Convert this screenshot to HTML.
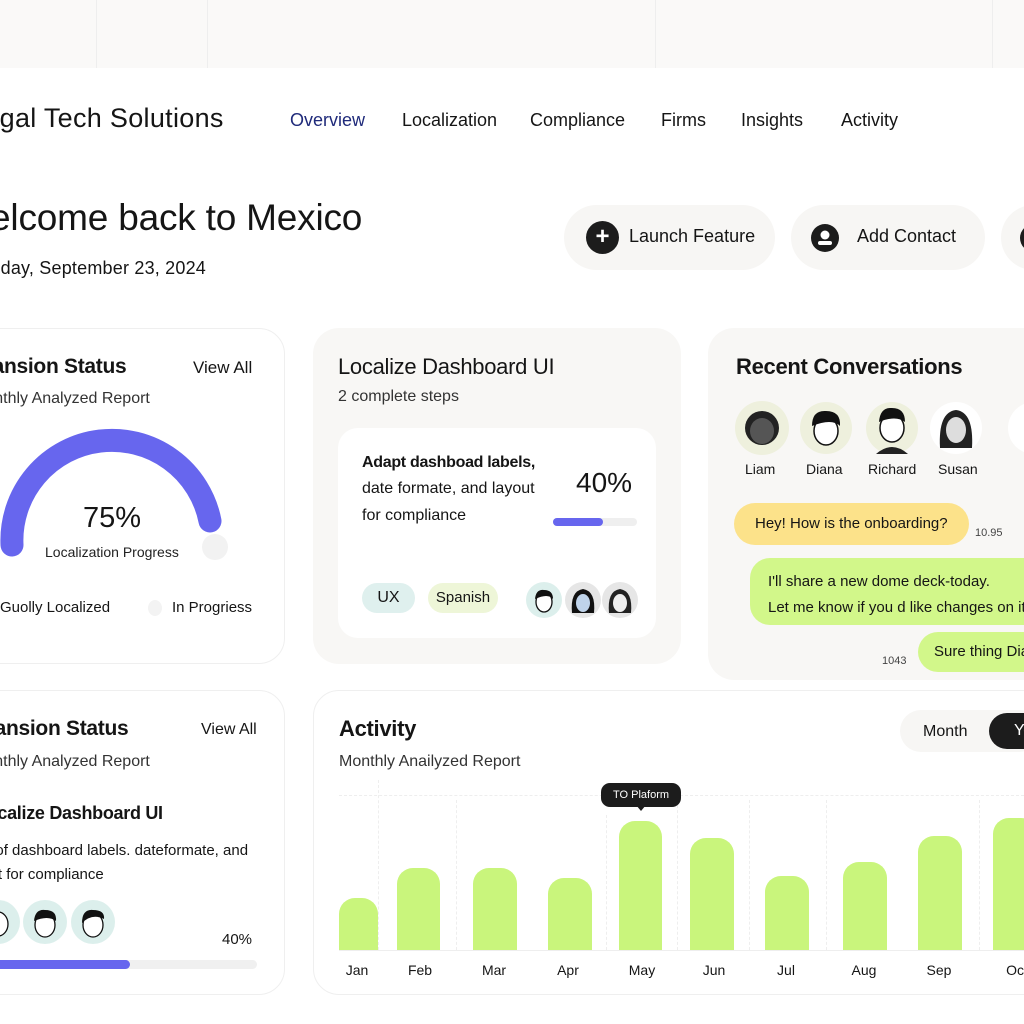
<!DOCTYPE html>
<html><head><meta charset="utf-8"><style>
*{box-sizing:border-box;margin:0;padding:0}
html,body{width:1024px;height:1024px;overflow:hidden}
body{background:#fff;font-family:"Liberation Sans",sans-serif;color:#151515;position:relative}
.a{position:absolute;white-space:nowrap}
.card{position:absolute;border-radius:26px}
.w{background:#fff;border:1.5px solid #efefef}
.g{background:#f8f7f5}
.bar{position:absolute;background:#c9f57c;border-radius:16px 16px 0 0;bottom:74px}
.ml{position:absolute;top:962px;font-size:14px;width:50px;text-align:center}
</style></head><body>
<div class="a" style="left:0;top:0;width:1024px;height:68px;background:#faf9f8"></div>
<div class="a" style="left:96px;top:0;width:1px;height:68px;background:#eee"></div>
<div class="a" style="left:207px;top:0;width:1px;height:68px;background:#eee"></div>
<div class="a" style="left:655px;top:0;width:1px;height:68px;background:#eee"></div>
<div class="a" style="left:992px;top:0;width:1px;height:68px;background:#eee"></div>

<div class="a" style="left:-31px;top:103px;font-size:27px;letter-spacing:0.3px">Legal Tech Solutions</div>
<div class="a" style="left:290px;top:110px;font-size:18px;color:#1f2a7a">Overview</div>
<div class="a" style="left:402px;top:110px;font-size:18px">Localization</div>
<div class="a" style="left:530px;top:110px;font-size:18px">Compliance</div>
<div class="a" style="left:661px;top:110px;font-size:18px">Firms</div>
<div class="a" style="left:741px;top:110px;font-size:18px">Insights</div>
<div class="a" style="left:841px;top:110px;font-size:18px">Activity</div>

<div class="a" style="left:-44px;top:197px;font-size:37px;letter-spacing:-0.2px">Welcome back to Mexico</div>
<div class="a" style="left:-35px;top:258px;font-size:18px;letter-spacing:0.2px">Monday, September 23, 2024</div>

<div class="a" style="left:564px;top:205px;width:211px;height:65px;border-radius:33px;background:#f7f6f4"></div>
<div class="a" style="left:586px;top:221px;width:33px;height:33px;border-radius:50%;background:#1c1c1c;color:#fff;font-size:24px;line-height:32px;text-align:center;font-weight:bold">+</div>
<div class="a" style="left:629px;top:226px;font-size:18px">Launch Feature</div>
<div class="a" style="left:791px;top:205px;width:194px;height:65px;border-radius:33px;background:#f7f6f4"></div>
<svg class="a" style="left:811px;top:224px" width="28" height="28"><circle cx="14" cy="14" r="14" fill="#1c1c1c"/><circle cx="14" cy="11" r="4.5" fill="#fff"/><rect x="7" y="17" width="14" height="4" rx="2" fill="#fff"/></svg>
<div class="a" style="left:857px;top:226px;font-size:18px">Add Contact</div>
<div class="a" style="left:1001px;top:205px;width:80px;height:65px;border-radius:33px;background:#f7f6f4"></div>
<div class="a" style="left:1020px;top:224px;width:28px;height:28px;border-radius:50%;background:#1c1c1c"></div>

<!-- card 1 -->
<div class="card w" style="left:-40px;top:328px;width:325px;height:336px"></div>
<div class="a" style="left:-45px;top:355px;font-size:21px;font-weight:bold;letter-spacing:-0.3px">Expansion Status</div>
<div class="a" style="left:193px;top:358px;font-size:17px">View All</div>
<div class="a" style="left:-28px;top:390px;font-size:16px;color:#333">Monthly Analyzed Report</div>
<svg class="a" style="left:0;top:425px" width="240" height="140">
<circle cx="215" cy="122" r="13" fill="#f2f2f2"/>
<path d="M12 120 A100 100 0 0 1 210 96" fill="none" stroke="#6766ee" stroke-width="23" stroke-linecap="round"/>
</svg>
<div class="a" style="left:83px;top:502px;font-size:29px">75%</div>
<div class="a" style="left:45px;top:544px;font-size:14px;color:#222">Localization Progress</div>
<div class="a" style="left:0;top:599px;font-size:15px">Guolly Localized</div>
<div class="a" style="left:148px;top:600px;width:14px;height:16px;border-radius:50%;background:#f3f3f3"></div>
<div class="a" style="left:172px;top:599px;font-size:15px">In Progriess</div>

<!-- card 2 -->
<div class="card g" style="left:313px;top:328px;width:368px;height:336px"></div>
<div class="a" style="left:338px;top:354px;font-size:22px;letter-spacing:-0.3px">Localize Dashboard UI</div>
<div class="a" style="left:338px;top:388px;font-size:16px;color:#333">2 complete steps</div>
<div class="card" style="left:338px;top:428px;width:318px;height:210px;background:#fff;border-radius:20px"></div>
<div class="a" style="left:362px;top:454px;font-size:16px;font-weight:bold;letter-spacing:-0.3px">Adapt dashboad labels,</div>
<div class="a" style="left:362px;top:480px;font-size:16px">date formate, and layout</div>
<div class="a" style="left:362px;top:507px;font-size:16px">for compliance</div>
<div class="a" style="left:576px;top:467px;font-size:28px">40%</div>
<div class="a" style="left:553px;top:518px;width:84px;height:8px;border-radius:4px;background:#efefef"></div>
<div class="a" style="left:553px;top:518px;width:50px;height:8px;border-radius:4px;background:#6766ee"></div>
<div class="a" style="left:362px;top:583px;width:53px;height:30px;border-radius:15px;background:#dff0ee;font-size:16px;line-height:30px;text-align:center">UX</div>
<div class="a" style="left:428px;top:583px;width:70px;height:30px;border-radius:15px;background:#eef6d8;font-size:15px;line-height:30px;text-align:center">Spanish</div>
<svg class="a" style="left:524px;top:581px" width="116" height="38">
<g><circle cx="20" cy="19" r="18" fill="#dcefec"/><ellipse cx="20" cy="21" rx="8" ry="10" fill="#fff" stroke="#111" stroke-width="1.3"/><path d="M11 18 Q12 8 20 9 Q29 9 29 18 Q24 12 11 18Z" fill="#111"/></g>
<g><circle cx="59" cy="19" r="18" fill="#e6e6e6"/><path d="M48 32 Q46 10 59 8 Q72 10 70 32Z" fill="#111"/><ellipse cx="59" cy="22" rx="7" ry="9" fill="#bfd3ea"/></g>
<g><circle cx="96" cy="19" r="18" fill="#e6e6e6"/><path d="M85 32 Q83 10 96 8 Q109 10 107 32Z" fill="#222"/><ellipse cx="96" cy="22" rx="7" ry="9" fill="#eee"/></g>
</svg>

<!-- card 3 -->
<div class="card g" style="left:708px;top:328px;width:360px;height:352px"></div>
<div class="a" style="left:736px;top:354px;font-size:22px;letter-spacing:-0.3px;font-weight:bold">Recent Conversations</div>
<svg class="a" style="left:734px;top:400px" width="290" height="58">
<circle cx="28" cy="28" r="27" fill="#eef0dd"/><circle cx="28" cy="28" r="17" fill="#222"/><ellipse cx="28" cy="31" rx="12" ry="13" fill="#555"/>
<circle cx="92" cy="28" r="26" fill="#eef0dd"/><ellipse cx="92" cy="31" rx="12" ry="14" fill="#fff" stroke="#111" stroke-width="1.5"/><path d="M78 26 Q78 10 92 11 Q107 11 106 26 Q98 18 78 26Z" fill="#111"/>
<circle cx="158" cy="28" r="26" fill="#eef0dd"/><ellipse cx="158" cy="28" rx="12" ry="14" fill="#fff" stroke="#111" stroke-width="1.5"/><path d="M145 22 Q146 7 158 8 Q171 8 171 22 Q162 15 145 22Z" fill="#111"/><path d="M142 54 Q158 40 174 54Z" fill="#222"/>
<circle cx="222" cy="28" r="26" fill="#fff"/><path d="M206 48 Q204 12 222 10 Q240 12 238 48Z" fill="#222"/><ellipse cx="222" cy="30" rx="10" ry="13" fill="#ddd"/>
<circle cx="300" cy="28" r="26" fill="#fff"/>
</svg>
<div class="a" style="left:745px;top:461px;font-size:14px">Liam</div>
<div class="a" style="left:806px;top:461px;font-size:14px">Diana</div>
<div class="a" style="left:868px;top:461px;font-size:14px">Richard</div>
<div class="a" style="left:938px;top:461px;font-size:14px">Susan</div>
<div class="a" style="left:734px;top:503px;width:235px;height:42px;border-radius:21px;background:#fce28a;font-size:15px;line-height:42px;padding-left:21px">Hey! How is the onboarding?</div>
<div class="a" style="left:975px;top:527px;font-size:11px;color:#444">10.95</div>
<div class="a" style="left:750px;top:558px;width:300px;height:67px;border-radius:20px;background:#d2f78a;font-size:15px;padding:11px 0 0 18px;line-height:26px">I'll share a new dome deck-today.<br>Let me know if you d like changes on it</div>
<div class="a" style="left:918px;top:632px;width:140px;height:40px;border-radius:20px;background:#d2f78a;font-size:15px;line-height:40px;padding-left:16px">Sure thing Diana</div>
<div class="a" style="left:882px;top:655px;font-size:11px;color:#444">1043</div>

<!-- card 4 -->
<div class="card w" style="left:-40px;top:690px;width:325px;height:305px"></div>
<div class="a" style="left:-43px;top:717px;font-size:21px;font-weight:bold;letter-spacing:-0.3px">Expansion Status</div>
<div class="a" style="left:201px;top:721px;font-size:16px">View All</div>
<div class="a" style="left:-28px;top:753px;font-size:16px;color:#333">Monthly Analyzed Report</div>
<div class="a" style="left:-24px;top:803px;font-size:18px;font-weight:bold;letter-spacing:-0.3px">Localize Dashboard UI</div>
<div class="a" style="left:-48px;top:842px;font-size:15px">Adapt of dashboard labels. dateformate, and</div>
<div class="a" style="left:-38px;top:866px;font-size:15px">layout for compliance</div>
<svg class="a" style="left:0;top:899px" width="120" height="46">
<circle cx="-2" cy="23" r="22" fill="#dcefec"/><ellipse cx="-2" cy="25" rx="10" ry="12" fill="#fff" stroke="#111" stroke-width="1.3"/>
<circle cx="45" cy="23" r="22" fill="#dcefec"/><ellipse cx="45" cy="26" rx="10" ry="12" fill="#fff" stroke="#111" stroke-width="1.3"/><path d="M34 22 Q35 10 45 11 Q57 11 56 22 Q48 16 34 22Z" fill="#111"/>
<circle cx="93" cy="23" r="22" fill="#dcefec"/><ellipse cx="93" cy="26" rx="10" ry="12" fill="#fff" stroke="#111" stroke-width="1.3"/><path d="M82 24 Q82 10 93 11 Q105 11 104 20 Q92 14 82 24Z" fill="#111"/>
</svg>
<div class="a" style="left:222px;top:931px;font-size:15px">40%</div>
<div class="a" style="left:0;top:960px;width:257px;height:9px;border-radius:5px;background:#f0f0f0"></div>
<div class="a" style="left:-10px;top:960px;width:140px;height:9px;border-radius:5px;background:#6766ee"></div>

<!-- card 5 -->
<div class="card w" style="left:313px;top:690px;width:760px;height:305px"></div>
<div class="a" style="left:339px;top:716px;font-size:22px;font-weight:bold;letter-spacing:-0.3px">Activity</div>
<div class="a" style="left:339px;top:753px;font-size:16px;color:#333">Monthly Anailyzed Report</div>
<div class="a" style="left:900px;top:710px;width:140px;height:42px;border-radius:21px;background:#f7f6f4"></div>
<div class="a" style="left:923px;top:723px;font-size:16px">Month</div>
<div class="a" style="left:989px;top:713px;width:60px;height:36px;border-radius:18px;background:#1c1c1c;color:#fff;font-size:16px;line-height:36px;padding-left:25px">Year</div>
<div class="a" style="left:339px;top:795px;width:685px;border-top:1px dashed #eee"></div>
<div class="a" style="left:339px;top:950px;width:685px;height:1px;background:#eee"></div>
<div class="a" style="left:378px;top:780px;height:170px;border-left:1px dashed #eee"></div>
<div class="a" style="left:456px;top:800px;height:150px;border-left:1px dashed #eee"></div>
<div class="a" style="left:606px;top:815px;height:135px;border-left:1px dashed #eee"></div>
<div class="a" style="left:677px;top:800px;height:150px;border-left:1px dashed #eee"></div>
<div class="a" style="left:749px;top:800px;height:150px;border-left:1px dashed #eee"></div>
<div class="a" style="left:826px;top:800px;height:150px;border-left:1px dashed #eee"></div>
<div class="a" style="left:979px;top:800px;height:150px;border-left:1px dashed #eee"></div>
<div class="bar" style="left:339px;width:39px;height:52px"></div>
<div class="bar" style="left:397px;width:43px;height:82px"></div>
<div class="bar" style="left:473px;width:44px;height:82px"></div>
<div class="bar" style="left:548px;width:44px;height:72px"></div>
<div class="bar" style="left:619px;width:43px;height:129px"></div>
<div class="bar" style="left:690px;width:44px;height:112px"></div>
<div class="bar" style="left:765px;width:44px;height:74px"></div>
<div class="bar" style="left:843px;width:44px;height:88px"></div>
<div class="bar" style="left:918px;width:44px;height:114px"></div>
<div class="bar" style="left:993px;width:44px;height:132px"></div>
<div class="a" style="left:601px;top:783px;width:80px;height:24px;border-radius:9px;background:#1c1c1c;color:#fff;font-size:11px;line-height:24px;text-align:center">TO Plaform</div>
<div class="a" style="left:636px;top:805px;width:0;height:0;border-left:5px solid transparent;border-right:5px solid transparent;border-top:6px solid #1c1c1c"></div>
<div class="ml" style="left:332px">Jan</div>
<div class="ml" style="left:395px">Feb</div>
<div class="ml" style="left:469px">Mar</div>
<div class="ml" style="left:543px">Apr</div>
<div class="ml" style="left:617px">May</div>
<div class="ml" style="left:689px">Jun</div>
<div class="ml" style="left:761px">Jul</div>
<div class="ml" style="left:839px">Aug</div>
<div class="ml" style="left:914px">Sep</div>
<div class="ml" style="left:992px">Oct</div>
</body></html>
